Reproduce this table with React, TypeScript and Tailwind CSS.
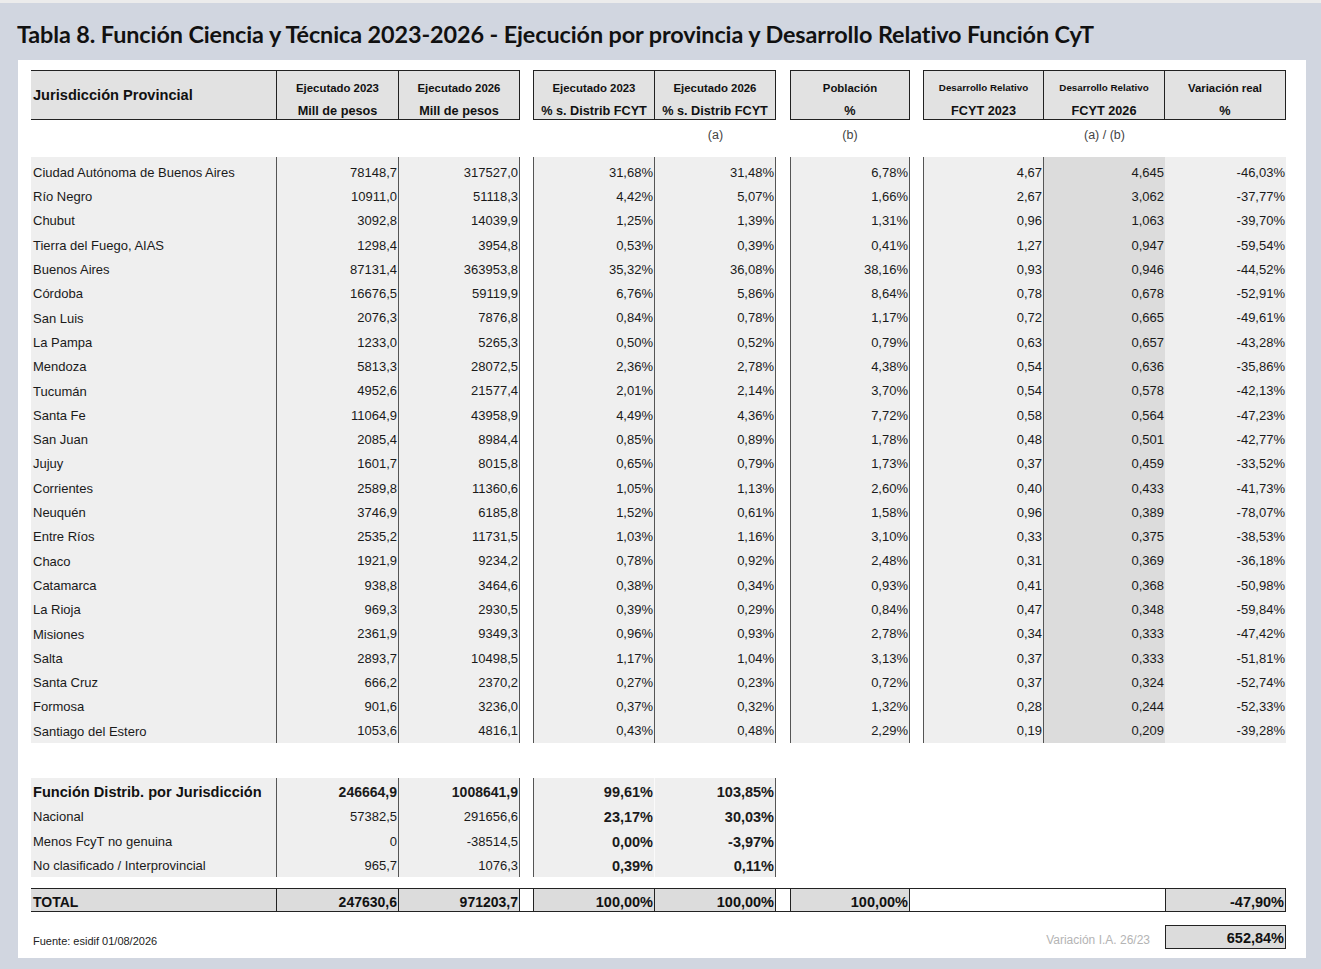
import React from "react";

const cols =
  "grid grid-cols-[246px_122px_121px_13px_122px_121px_14px_120px_13px_121px_121px_121px]";

const rows: string[][] = [
  ["Ciudad Autónoma de Buenos Aires", "78148,7", "317527,0", "31,68%", "31,48%", "6,78%", "4,67", "4,645", "-46,03%"],
  ["Río Negro", "10911,0", "51118,3", "4,42%", "5,07%", "1,66%", "2,67", "3,062", "-37,77%"],
  ["Chubut", "3092,8", "14039,9", "1,25%", "1,39%", "1,31%", "0,96", "1,063", "-39,70%"],
  ["Tierra del Fuego, AIAS", "1298,4", "3954,8", "0,53%", "0,39%", "0,41%", "1,27", "0,947", "-59,54%"],
  ["Buenos Aires", "87131,4", "363953,8", "35,32%", "36,08%", "38,16%", "0,93", "0,946", "-44,52%"],
  ["Córdoba", "16676,5", "59119,9", "6,76%", "5,86%", "8,64%", "0,78", "0,678", "-52,91%"],
  ["San Luis", "2076,3", "7876,8", "0,84%", "0,78%", "1,17%", "0,72", "0,665", "-49,61%"],
  ["La Pampa", "1233,0", "5265,3", "0,50%", "0,52%", "0,79%", "0,63", "0,657", "-43,28%"],
  ["Mendoza", "5813,3", "28072,5", "2,36%", "2,78%", "4,38%", "0,54", "0,636", "-35,86%"],
  ["Tucumán", "4952,6", "21577,4", "2,01%", "2,14%", "3,70%", "0,54", "0,578", "-42,13%"],
  ["Santa Fe", "11064,9", "43958,9", "4,49%", "4,36%", "7,72%", "0,58", "0,564", "-47,23%"],
  ["San Juan", "2085,4", "8984,4", "0,85%", "0,89%", "1,78%", "0,48", "0,501", "-42,77%"],
  ["Jujuy", "1601,7", "8015,8", "0,65%", "0,79%", "1,73%", "0,37", "0,459", "-33,52%"],
  ["Corrientes", "2589,8", "11360,6", "1,05%", "1,13%", "2,60%", "0,40", "0,433", "-41,73%"],
  ["Neuquén", "3746,9", "6185,8", "1,52%", "0,61%", "1,58%", "0,96", "0,389", "-78,07%"],
  ["Entre Ríos", "2535,2", "11731,5", "1,03%", "1,16%", "3,10%", "0,33", "0,375", "-38,53%"],
  ["Chaco", "1921,9", "9234,2", "0,78%", "0,92%", "2,48%", "0,31", "0,369", "-36,18%"],
  ["Catamarca", "938,8", "3464,6", "0,38%", "0,34%", "0,93%", "0,41", "0,368", "-50,98%"],
  ["La Rioja", "969,3", "2930,5", "0,39%", "0,29%", "0,84%", "0,47", "0,348", "-59,84%"],
  ["Misiones", "2361,9", "9349,3", "0,96%", "0,93%", "2,78%", "0,34", "0,333", "-47,42%"],
  ["Salta", "2893,7", "10498,5", "1,17%", "1,04%", "3,13%", "0,37", "0,333", "-51,81%"],
  ["Santa Cruz", "666,2", "2370,2", "0,27%", "0,23%", "0,72%", "0,37", "0,324", "-52,74%"],
  ["Formosa", "901,6", "3236,0", "0,37%", "0,32%", "1,32%", "0,28", "0,244", "-52,33%"],
  ["Santiago del Estero", "1053,6", "4816,1", "0,43%", "0,48%", "2,29%", "0,19", "0,209", "-39,28%"],
];

const summary = [
  { label: "Función Distrib. por Jurisdicción", a: "246664,9", b: "1008641,9", c: "99,61%", d: "103,85%", head: true },
  { label: "Nacional", a: "57382,5", b: "291656,6", c: "23,17%", d: "30,03%" },
  { label: "Menos FcyT no genuina", a: "0", b: "-38514,5", c: "0,00%", d: "-3,97%" },
  { label: "No clasificado / Interprovincial", a: "965,7", b: "1076,3", c: "0,39%", d: "0,11%" },
];

const HeadCell = ({ top, bottom, small, className }: { top: string; bottom: string; small?: boolean; className: string }) => (
  <div className={`flex flex-col items-center pt-[9px] bg-[#e2e2e2] border-[#222] font-bold text-[#111] ${className}`}>
    <span className={`leading-[16px] ${small ? "text-[9.8px] font-semibold" : "text-[11.4px]"}`}>{top}</span>
    <span className="mt-[7px] leading-[16px] text-[12.7px]">{bottom}</span>
  </div>
);

const num = "flex items-center justify-end pr-[1px] leading-[16px]";

export default function App() {
  return (
    <div className="w-[1321px] min-h-[969px] bg-[#d1d6e0] border-t-[3px] border-[#ececec] font-['Liberation_Sans',Arial,sans-serif] text-[#1a1a1a]">
      <div className="h-[57px] pt-[6px] pl-[17px] flex items-center">
        <h1 className="font-['Lato',sans-serif] font-bold text-[23.4px] text-[#111] tracking-[-0.1px]">
          Tabla 8. Función Ciencia y Técnica 2023-2026 - Ejecución por provincia y Desarrollo Relativo Función CyT
        </h1>
      </div>

      <div className="ml-[18px] w-[1288px] bg-white pt-[10px] pl-[13px] pb-[9px]">
        {/* header */}
        <div className={`${cols} h-[48px]`}>
          <div className="flex items-center pl-[2px] pt-[2px] bg-[#e2e2e2] border-y border-r border-[#222] text-[14.6px] font-bold text-[#111]">
            Jurisdicción Provincial
          </div>
          <HeadCell top="Ejecutado 2023" bottom="Mill de pesos" className="border-y border-r" />
          <HeadCell top="Ejecutado 2026" bottom="Mill de pesos" className="border-y border-r" />
          <div />
          <HeadCell top="Ejecutado 2023" bottom="% s. Distrib FCYT" className="border-y border-x" />
          <HeadCell top="Ejecutado 2026" bottom="% s. Distrib FCYT" className="border-y border-r" />
          <div />
          <HeadCell top="Población" bottom="%" className="border-y border-x" />
          <div />
          <HeadCell top="Desarrollo Relativo" bottom="FCYT 2023" small className="border-y border-x" />
          <HeadCell top="Desarrollo Relativo" bottom="FCYT 2026" small className="border-y border-r" />
          <HeadCell top="Variación real" bottom="%" className="border-y border-r" />
        </div>

        {/* notes row */}
        <div className={`${cols} h-[39px] text-[12.5px] text-[#444]`}>
          <div className="col-span-4" />
          <div />
          <div className="pt-[9px] leading-[16px] text-center">(a)</div>
          <div />
          <div className="pt-[9px] leading-[16px] text-center">(b)</div>
          <div />
          <div />
          <div className="pt-[9px] leading-[16px] text-center">(a) / (b)</div>
          <div />
        </div>

        {/* provinces */}
        <div className="text-[13px]">
          {[null, ...rows].map((r, i) => {
            const p = r ? "pt-[1px]" : "";
            return (
              <div key={i} className={`${cols} ${r ? "h-[24.3px]" : "h-[3px]"}`}>
                <div className={`flex items-center pl-[2px] ${p} bg-[#efefef] border-r border-[#555] whitespace-nowrap`}>{r?.[0]}</div>
                <div className={`${num} ${p} bg-[#efefef] border-r border-[#555]`}>{r?.[1]}</div>
                <div className={`${num} ${p} bg-[#efefef] border-r border-[#555]`}>{r?.[2]}</div>
                <div />
                <div className={`${num} ${p} bg-[#efefef] border-x border-[#555]`}>{r?.[3]}</div>
                <div className={`${num} ${p} bg-[#efefef] border-r border-[#555]`}>{r?.[4]}</div>
                <div />
                <div className={`${num} ${p} bg-[#efefef] border-x border-[#555]`}>{r?.[5]}</div>
                <div />
                <div className={`${num} ${p} bg-[#efefef] border-x border-[#555]`}>{r?.[6]}</div>
                <div className={`${num} ${p} bg-[#dcdcdc]`}>{r?.[7]}</div>
                <div className={`${num} ${p} bg-[#efefef]`}>{r?.[8]}</div>
              </div>
            );
          })}
        </div>

        <div className="h-[35px]" />

        {/* summary */}
        <div className="text-[13px]">
          {summary.map((s, i) => (
            <div key={i} className={`${cols} h-[24.75px]`}>
              <div className={`flex items-center pl-[2px] pt-[3px] leading-[16px] bg-[#efefef] border-r border-[#555] whitespace-nowrap ${s.head ? "font-bold text-[14.6px] text-[#111]" : ""}`}>
                {s.label}
              </div>
              <div className={`${num} pt-[3px] bg-[#efefef] border-r border-[#555] ${s.head ? "font-bold text-[14px]" : ""}`}>{s.a}</div>
              <div className={`${num} pt-[3px] bg-[#efefef] border-r border-[#555] ${s.head ? "font-bold text-[14px]" : ""}`}>{s.b}</div>
              <div />
              <div className={`${num} pt-[3px] bg-[#efefef] border-l border-[#555] border-r border-r-[#fafafa] font-bold text-[14.5px]`}>{s.c}</div>
              <div className={`${num} pt-[3px] bg-[#efefef] border-r border-[#555] font-bold text-[14.5px]`}>{s.d}</div>
              <div className="col-span-6" />
            </div>
          ))}
        </div>

        <div className="h-[11px]" />

        {/* total */}
        <div className={`${cols} h-[24px] font-bold text-[14px] text-[#111]`}>
          <div className="flex items-center pl-[2px] pt-[3px] leading-[16px] bg-[#dcdcdc] border-y border-r border-[#222]">TOTAL</div>
          <div className={`${num} pt-[3px] bg-[#dcdcdc] border-y border-r border-[#222]`}>247630,6</div>
          <div className={`${num} pt-[3px] bg-[#dcdcdc] border-y border-r border-[#222]`}>971203,7</div>
          <div className="border-y border-[#222]" />
          <div className={`${num} pt-[3px] bg-[#dcdcdc] border-y border-x border-[#222] text-[14.5px]`}>100,00%</div>
          <div className={`${num} pt-[3px] bg-[#dcdcdc] border-y border-r border-[#222] text-[14.5px]`}>100,00%</div>
          <div className="border-y border-[#222]" />
          <div className={`${num} pt-[3px] bg-[#dcdcdc] border-y border-x border-[#222] text-[14.5px]`}>100,00%</div>
          <div className="col-span-3 border-y border-[#222]" />
          <div className={`${num} pt-[3px] bg-[#dcdcdc] border-y border-x border-[#222] text-[14.5px]`}>-47,90%</div>
        </div>

        <div className="h-[13px]" />

        {/* footer */}
        <div className={`${cols} h-[24px]`}>
          <div className="col-span-10 flex items-end pl-[2px] text-[11px] text-[#222]">Fuente: esidif 01/08/2026</div>
          <div className="flex items-end justify-end pr-[15px] text-[12px] text-[#b4b4b4] whitespace-nowrap">Variación I.A. 26/23</div>
          <div className={`${num} pt-[2px] bg-[#dcdcdc] border border-[#222] font-bold text-[14.5px] text-[#111]`}>652,84%</div>
        </div>
      </div>
    </div>
  );
}
